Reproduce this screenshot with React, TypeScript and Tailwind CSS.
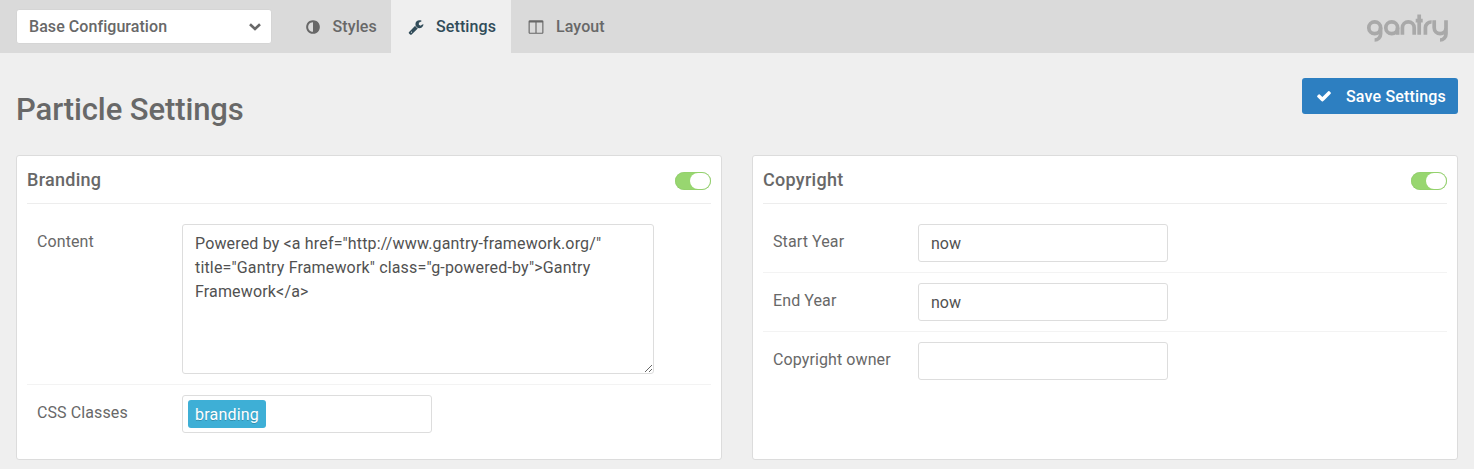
import type { ReactNode } from 'react';

const ADJUST =
  'M896 1440v-1088q-148 0-273 73t-198 198-73 273 73 273 198 198 273 73zm768-544q0 209-103 385.5t-279.5 279.5-385.5 103-385.5-103-279.5-279.5-103-385.5 103-385.5 279.5-279.5 385.5-103 385.5 103 279.5 279.5 103 385.5z';
const WRENCH =
  'M448 1472q0-26-19-45t-45-19-45 19-19 45 19 45 45 19 45-19 19-45zm644-420l-682 682q-37 37-90 37-52 0-91-37l-106-108q-38-36-38-90 0-53 38-91l681-681q39 98 114.5 173.5t173.5 114.5zm634-435q0 39-23 106-47 134-164.5 217.5t-258.5 83.5q-185 0-316.5-131.5t-131.5-316.5 131.5-316.5 316.5-131.5q58 0 121.5 16.5t107.5 46.5q16 11 16 28t-16 28l-293 169v224l193 107q5-3 79-48.5t135.5-81 70.5-35.5q15 0 23.5 10t8.5 25z';
const COLUMNS =
  'M224 1536h608v-1152h-640v1120q0 13 9.5 22.5t22.5 9.5zm1376-32v-1120h-640v1152h608q13 0 22.5-9.5t9.5-22.5zm128-1216v1216q0 66-47 113t-113 47h-1344q-66 0-113-47t-47-113v-1216q0-66 47-113t113-47h1344q66 0 113 47t47 113z';
const CHECK =
  'M1671 566q0 40-28 68l-724 724-136 136q-28 28-68 28t-68-28l-136-136-362-362q-28-28-28-68t28-68l136-136q28-28 68-28t68 28l294 295 656-657q28-28 68-28t68 28l136 136q28 28 28 68z';

function Icon({ path }: { path: string }) {
  return (
    <svg viewBox="0 0 1792 1792" className="size-4 shrink-0 fill-current" aria-hidden="true">
      <path d={path} />
    </svg>
  );
}

function Logo() {
  return (
    <svg
      viewBox="0 0 84 32"
      className="h-8 w-[84px] fill-none stroke-[#a9a9a9]"
      strokeWidth="3.7"
      role="img"
      aria-label="gantry"
    >
      <circle cx="8.7" cy="15.8" r="5.9" />
      <path d="M14.6 15.8V22a6 6 0 0 1-6 6" />
      <circle cx="25.7" cy="15.8" r="5.9" />
      <path d="M31.6 15.8v7" />
      <path d="M36.4 22.8v-7a5.9 5.9 0 0 1 11.8 0v7" />
      <path d="M53.2 2.5v20.3M49.7 8.7h7" />
      <path d="M59.4 22.8v-7a5.8 5.8 0 0 1 6.2-5.8" />
      <path d="M68.2 8.3v7.4a5.9 5.9 0 0 0 11.8 0M80 8.3V22a6 6 0 0 1-6 6" />
    </svg>
  );
}

function Tab({ icon, label, width, active }: { icon: string; label: string; width: string; active?: boolean }) {
  return (
    <a
      className={`flex h-[53px] items-center gap-3 ${width} ${
        active ? 'bg-[#efefef] text-[#314c59]' : 'text-[#686868]'
      }`}
    >
      <Icon path={icon} />
      <span className="tracking-[0.1px]">{label}</span>
    </a>
  );
}

function Toggle() {
  return (
    <div className="flex h-[18px] w-9 justify-end rounded-full bg-[#98d670] p-px shadow-[inset_0_0_1px_#6fae48]">
      <div className="h-4 w-5 rounded-full bg-white" />
    </div>
  );
}

function Card({ title, children }: { title: string; children: ReactNode }) {
  return (
    <section className="h-[305px] flex-1 rounded-[3px] border border-[#dcdcdc] bg-white px-2.5">
      <div className="flex h-[48px] items-center justify-between border-b border-[#ededed]">
        <h2 className="text-[18px] leading-6 font-medium tracking-[0.28px]">{title}</h2>
        <div className="pt-[3px]">
          <Toggle />
        </div>
      </div>
      <div className="pt-2.5">{children}</div>
    </section>
  );
}

function Row({ label, children, last }: { label: string; children: ReactNode; last?: boolean }) {
  return (
    <div className={`flex items-start py-2.5 pl-2.5 ${last ? '' : 'border-b border-[#f3f3f3]'}`}>
      <label className="w-[145px] pt-1.5 leading-6 tracking-[0.1px]">{label}</label>
      {children}
    </div>
  );
}

function Input({ value }: { value: string }) {
  return (
    <input
      defaultValue={value}
      className="h-[38px] w-[250px] rounded-[3px] border border-[#dddddd] bg-white px-3 text-[#515151] outline-none"
    />
  );
}

export default function App() {
  return (
    <div className="h-[469px] overflow-hidden bg-[#efefef] font-[Roboto,sans-serif] text-base text-[#686868]">
      <header className="flex h-[53px] items-center bg-[#dadada] font-medium">
        <div className="ml-4 flex h-[35px] w-[256px] items-center justify-between rounded-[3px] border border-[#d5d5d5] bg-white pr-2.5 pl-3">
          <span className="pt-px tracking-[0.06px]">Base Configuration</span>
          <svg viewBox="0 0 12 8" className="h-2 w-3 fill-none stroke-current" aria-hidden="true">
            <path d="M1 1.2 6 6 11 1.2" strokeWidth="2.6" />
          </svg>
        </div>
        <nav className="ml-4 flex">
          <Tab icon={ADJUST} label="Styles" width="w-[103px] pl-[16.5px]" />
          <Tab icon={WRENCH} label="Settings" width="w-[120px] pl-[17px]" active />
          <Tab icon={COLUMNS} label="Layout" width="w-[120px] pl-[17px]" />
        </nav>
        <div className="mr-6 ml-auto pt-[3px]">
          <Logo />
        </div>
      </header>
      <div className="flex h-[102px] items-start justify-between px-4 pt-[25px]">
        <h1 className="pt-[13px] text-[31px] leading-[38px] font-medium tracking-[-0.1px]">Particle Settings</h1>
        <button className="flex h-9 w-[156px] items-center gap-3.5 rounded-[3px] bg-[#2d7fc1] pl-3.5 font-medium text-white">
          <Icon path={CHECK} />
          <span className="pt-0.5 tracking-[0.16px]">Save Settings</span>
        </button>
      </div>
      <main className="flex gap-[30px] px-4">
        <Card title="Branding">
          <Row label="Content">
            <textarea
              defaultValue={
                'Powered by <a href="http://www.gantry-framework.org/" title="Gantry Framework" class="g-powered-by">Gantry Framework</a>'
              }
              spellCheck={false}
              className="h-[150px] w-[472px] rounded-[3px] border border-[#dddddd] bg-white px-3 py-[7px] leading-6 tracking-[0.16px] text-[#515151] outline-none"
            />
          </Row>
          <Row label="CSS Classes" last>
            <div className="flex h-[38px] w-[250px] items-start rounded-[3px] border border-[#dddddd] p-[5px] pt-1">
              <span className="h-7 w-[78px] rounded-[3px] bg-[#3eafd6] px-[7px] pt-px leading-7 tracking-[0.2px] text-white [text-shadow:0_1px_0_rgba(0,0,0,0.2)]">
                branding
              </span>
            </div>
          </Row>
        </Card>
        <Card title="Copyright">
          <Row label="Start Year">
            <Input value="now" />
          </Row>
          <Row label="End Year">
            <Input value="now" />
          </Row>
          <Row label="Copyright owner" last>
            <Input value="" />
          </Row>
        </Card>
      </main>
    </div>
  );
}
